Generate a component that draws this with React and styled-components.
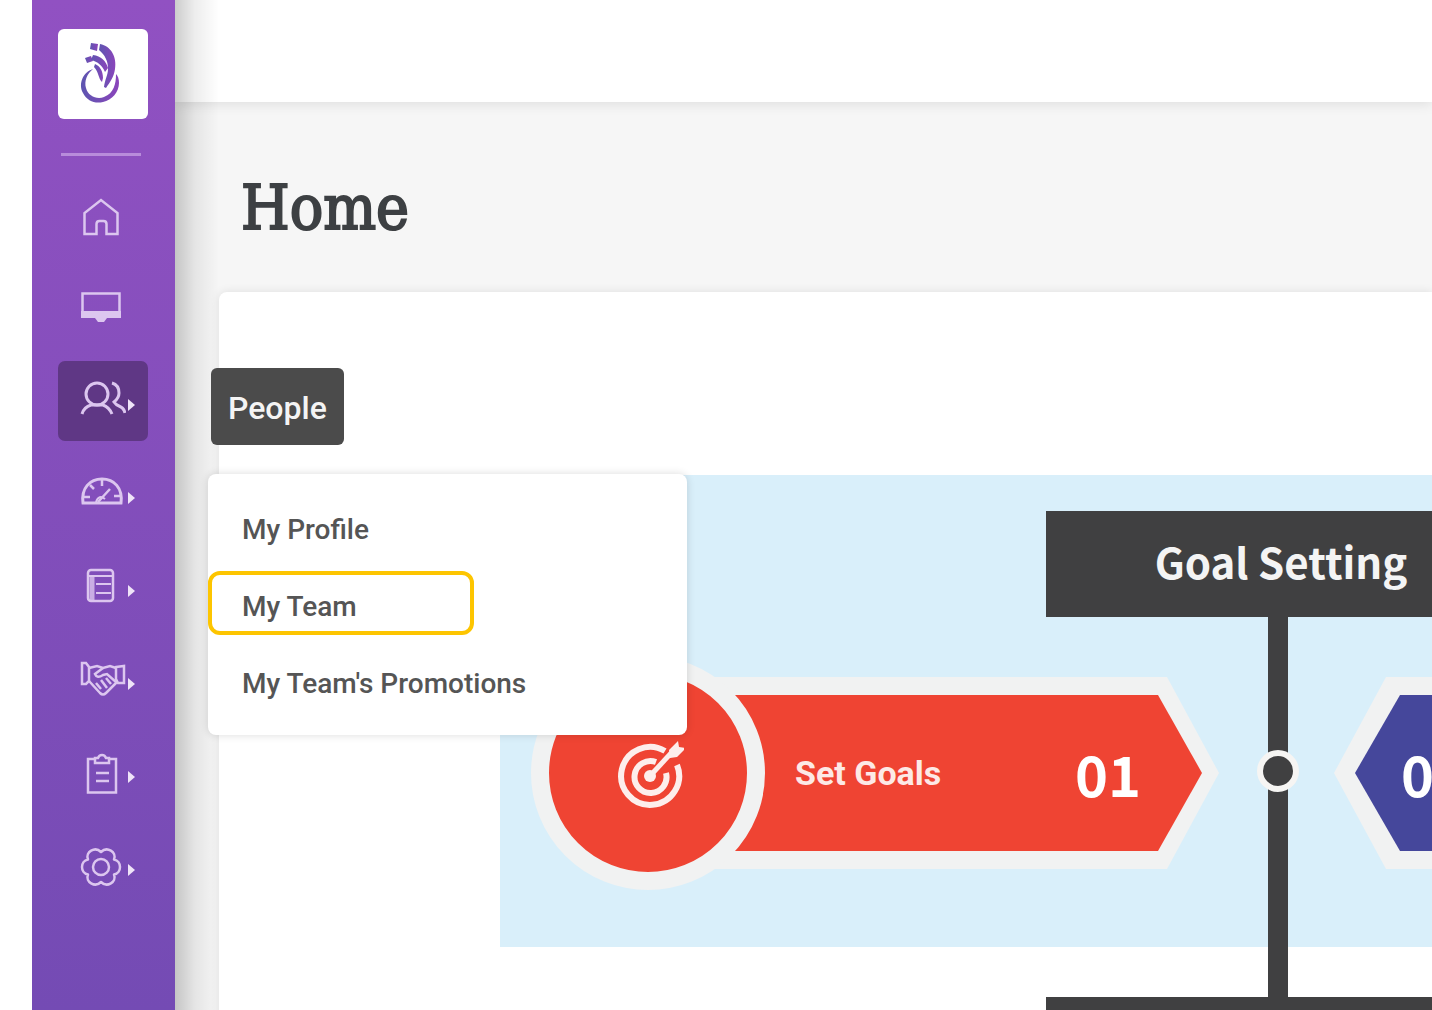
import React from 'react'
import styled, { createGlobalStyle } from 'styled-components'

const GlobalStyle = createGlobalStyle`
  * {
    box-sizing: border-box;
  }
  body {
    margin: 0;
    background-color: #fff;
    font-family: Roboto, 'Liberation Sans', sans-serif;
  }
`

const Page = styled.div`
  display: flex;
  width: 100%;
  height: 100vh;
  padding-left: 32px;
  overflow: hidden;
`

const Sidebar = styled.aside`
  position: relative;
  z-index: 2;
  flex: none;
  display: flex;
  flex-direction: column;
  width: 143px;
  padding: 29px 26px 0;
  background: linear-gradient(#9151c2, #744bb4);

  &::after {
    content: '';
    position: absolute;
    top: 0;
    bottom: 0;
    left: 100%;
    width: 44px;
    background: linear-gradient(
      to right,
      rgba(0, 0, 0, 0.2),
      rgba(0, 0, 0, 0.07) 45%,
      rgba(0, 0, 0, 0)
    );
    pointer-events: none;
  }
`

const LogoLink = styled.a`
  display: block;
  width: 90px;
  height: 90px;
  border-radius: 6px;
  background-color: #fff;
`

const Divider = styled.hr`
  width: 80px;
  height: 3px;
  margin: 34px 0 19px 3px;
  border: 0;
  background-color: #b88cdb;
`

const NavList = styled.ul`
  display: flex;
  flex-direction: column;
  gap: 13px;
  margin: 0;
  padding: 0;
  list-style: none;
`

const NavItem = styled.li`
  position: relative;
`

const NavButton = styled.button`
  display: flex;
  align-items: center;
  width: 90px;
  height: 80px;
  padding: 0 0 0 20px;
  border: 0;
  border-radius: 7px;
  background-color: ${({ $active }) => ($active ? '#5f3785' : 'transparent')};
  color: #dcc6ef;
  cursor: pointer;
`

const Icon = styled.svg`
  flex: none;
  width: 48px;
  height: 48px;
  fill: none;
  stroke: currentColor;
  stroke-width: 3;
`

const Caret = styled.svg`
  flex: none;
  width: 10px;
  height: 48px;
  fill: #efe4f8;
`

const Flyout = styled.div`
  position: absolute;
  z-index: 1;
  top: 7px;
  left: 150px;
  width: 479px;
`

const FlyoutTitle = styled.div`
  width: fit-content;
  height: 77px;
  margin: 0 0 29px 3px;
  padding: 0 17px;
  border-radius: 6px;
  background-color: #4b4b4b;
  color: #f4f4f4;
  font-size: 32px;
  font-weight: 500;
  line-height: 80px;
`

const Menu = styled.ul`
  display: flex;
  flex-direction: column;
  gap: 13px;
  margin: 0;
  padding: 20px 0 23px;
  border-radius: 8px;
  background-color: #fff;
  box-shadow: 0 0 8px rgba(0, 0, 0, 0.14);
  list-style: none;
`

const MenuLink = styled.a`
  display: block;
  width: 266px;
  height: 64px;
  padding-left: 30px;
  border: 4px solid ${({ $marked }) => ($marked ? '#fdc500' : 'transparent')};
  border-radius: 12px;
  color: #555;
  font-size: 28px;
  font-weight: 500;
  line-height: 64px;
  text-decoration: none;
  white-space: nowrap;
`

const Main = styled.main`
  flex: 1;
  min-width: 0;
  background-color: #f6f6f6;
`

const TopBar = styled.header`
  height: 102px;
  background-color: #fff;
  box-shadow: 0 2px 12px rgba(0, 0, 0, 0.1);
`

const PageTitle = styled.h1`
  margin: 0;
  padding: 66px 66px 0;
  height: 190px;
  color: #3d4043;
  font-family: 'DejaVu Serif Condensed', 'DejaVu Serif', serif;
  font-size: 62px;
  font-weight: 400;
  line-height: 80px;
  -webkit-text-stroke: 2px #3d4043;
`

const Card = styled.section`
  height: 100%;
  margin-left: 44px;
  padding: 183px 0 0 281px;
  border-radius: 8px 0 0 0;
  background-color: #fff;
  box-shadow: 0 0 10px rgba(0, 0, 0, 0.1);
  overflow: hidden;
`

const Diagram = styled.div`
  width: 1554px;
`

const Stage = styled.div`
  padding-top: 36px;
  background-color: ${({ $tint }) => $tint};
`

const StageTitle = styled.h2`
  width: 470px;
  height: 106px;
  margin: 0 0 0 546px;
  background-color: #404041;
  color: #f4f4f4;
  font-family: 'Noto Sans CJK JP', sans-serif;
  font-size: 42px;
  font-weight: 700;
  line-height: 100px;
  text-align: center;
`

const Lane = styled.div`
  display: grid;
  grid-template-columns: 768px 20px 1fr;
  height: 330px;
`

const Spine = styled.div`
  display: flex;
  justify-content: center;
  padding-top: 133px;
  background-color: #404041;
`

const SpineDot = styled.span`
  flex: none;
  width: 42px;
  height: 42px;
  border: 6px solid #f6f5f3;
  border-radius: 50%;
  background-color: #404041;
`

const Connector = styled.div`
  width: 20px;
  height: 50px;
  margin-left: 768px;
  background-color: #404041;
`

const Step = styled.div`
  display: flex;
  align-items: center;
  height: 234px;
  margin-top: 39px;
  padding: ${({ $side }) => ($side === 'left' ? '0 49px 0 31px' : '0 31px 0 46px')};
`

const StepBadge = styled.div`
  z-index: 1;
  flex: none;
  display: grid;
  place-items: center;
  width: 234px;
  height: 234px;
  border: 18px solid #f1f2f2;
  border-radius: 50%;
  background-color: ${({ $color }) => $color};
`

const StepOutline = styled.div`
  flex: 1;
  height: 192px;
  background-color: #f1f2f2;
  ${({ $side }) =>
    $side === 'left'
      ? `margin-left: -117px;
         padding: 18px 17px 18px 0;
         clip-path: polygon(0 0, calc(100% - 52px) 0, 100% 50%, calc(100% - 52px) 100%, 0 100%);`
      : `margin-right: -117px;
         padding: 18px 0 18px 21px;
         clip-path: polygon(52px 0, 100% 0, 100% 100%, 52px 100%, 0 50%);`}
`

const StepBar = styled.div`
  display: flex;
  align-items: center;
  justify-content: space-between;
  height: 100%;
  background-color: ${({ $color }) => $color};
  color: #fff;
  ${({ $side }) =>
    $side === 'left'
      ? `padding: 0 61px 0 147px;
         clip-path: polygon(0 0, calc(100% - 44px) 0, 100% 50%, calc(100% - 44px) 100%, 0 100%);`
      : `padding: 0 147px 0 46px;
         clip-path: polygon(45px 0, 100% 0, 100% 100%, 45px 100%, 0 50%);`}
`

const StepName = styled.span`
  color: #fde9e6;
  font-size: 34px;
  font-weight: 700;
`

const StepNumber = styled.span`
  font-family: 'Noto Sans CJK JP', sans-serif;
  font-size: 56px;
  font-weight: 700;
  line-height: 56px;
`

const Target = styled.svg`
  width: 72px;
  height: 72px;
  fill: none;
  stroke: #fdeeec;
  stroke-width: 6;
`

const icons = {
  home: <path d="M6.500 43V22L23 9l16.500 13v21H28.500V33q0-3-3-3h-4q-3 0-3 3v10z" strokeWidth="2.500" />,
  screen: (
    <>
      <path d="M4.500 30V9.500h37V30" strokeWidth="2.500" />
      <path d="M3 27h40v7H29l-3 4h-6l-3-4H3z" fill="currentColor" stroke="none" />
    </>
  ),
  people: (
    <>
      <circle cx="19" cy="17" r="11" strokeWidth="3" />
      <path d="M4 37q2-7 9-9h12q6 2 9 9" />
      <path d="M34 6q7 2 7 10 0 5-5 9 2 3 5 4 5 2 6 7" />
    </>
  ),
  gauge: (
    <>
      <path d="M5 33C3 18 12 9 24 9s21 9 19 24z" />
      <path d="M20 32l12-13M24 10v6M12 15l4 4M6 27h6M36 26h6" strokeWidth="2.500" />
      <path d="M18 32q3-8 9-3" strokeWidth="2" />
    </>
  ),
  ledger: (
    <>
      <rect x="10" y="7" width="25" height="31" rx="3" strokeWidth="2.500" />
      <path d="M10 13h25M18 21h15M18 30h15" strokeWidth="2" />
      <path d="M14 13v24" strokeWidth="5" opacity="0.8" />
    </>
  ),
  handshake: (
    <g strokeWidth="2.500">
      <path d="M4 7h4l3 4v14l-3 3H4z" />
      <path d="M38 11l8-1v17h-6l-2-4z" />
      <path d="M11 12l8-2 6 2 7-2 6 2M11 25l11 12q3 3 6 0l11-11" />
      <path d="M25 12l-8 6q2 5 8 1l4-1 9 8M18 27l5 6M23 24l6 8M28 22l5 6" />
    </g>
  ),
  clipboard: (
    <>
      <path d="M17 10h-7v33.500h28V10h-7" strokeWidth="2.500" />
      <path d="M17 14v-5h3q1-3 4-3t4 3h3v5z" strokeWidth="2.500" />
      <path d="M18 24h13M18 32h13" strokeWidth="2.500" />
    </>
  ),
  gear: (
    <g strokeWidth="2.500" strokeLinejoin="round">
      <circle cx="23" cy="25" r="8" />
      <path d="M36 17.500C44 19 44 31 36 32.500C39 40 29 46 23 40C17 46 7 40 10 32.500C2 31 2 19 10 17.500C7 10 17 4 23 10C29 4 39 10 36 17.500z" />
    </g>
  ),
}

const navItems = [
  { id: 'home', label: 'Home' },
  { id: 'screen', label: 'Dashboard' },
  { id: 'people', label: 'People', more: true },
  { id: 'gauge', label: 'Performance', more: true },
  { id: 'ledger', label: 'Records', more: true },
  { id: 'handshake', label: 'Engagement', more: true },
  { id: 'clipboard', label: 'Tasks', more: true },
  { id: 'gear', label: 'Settings', more: true },
]

const menuItems = ['My Profile', 'My Team', "My Team's Promotions"]

const Logo = () => (
  <svg width="90" height="90" viewBox="0 0 90 90" aria-hidden="true">
    <defs>
      <linearGradient id="logo" x1="0" y1="0" x2="1" y2="0">
        <stop offset="0" stopColor="#5d55b0" />
        <stop offset="1" stopColor="#8b45bb" />
      </linearGradient>
    </defs>
    <g fill="url(#logo)">
      <path d="M33 14l7 1-1 7-7-2z" />
      <path d="M42 15c11 2 17 13 15 25-1 8-5 13-9 19l-2-1c1-8 4-12 4-18 0-8-3-14-9-19z" />
      <path d="M27 29l6-2 2 5-6 2z" />
      <path d="M35 26c8 1 13 6 15 13l-3 4c-3-7-7-10-14-12z" />
      <path d="M37 35c5 2 8 7 8 14l-1 4c-4-4-3-10-8-15z" />
      <path d="M35 40c-10 3-15 15-10 24 4 8 12 11 20 9 9-2 16-10 16-19 0-4-1-7-3-9 0 10-2 19-12 23-7 3-16-1-18-9-2-7 1-14 7-19z" />
    </g>
  </svg>
)

const NavEntry = ({ item, active, children }) => (
  <NavItem>
    <NavButton type="button" aria-label={item.label} $active={active}>
      <Icon viewBox="0 0 48 48">{icons[item.id]}</Icon>
      {item.more && (
        <Caret viewBox="0 0 10 48">
          <path d="M2 22l7 6-7 6z" />
        </Caret>
      )}
    </NavButton>
    {children}
  </NavItem>
)

const PeopleFlyout = () => (
  <Flyout>
    <FlyoutTitle>People</FlyoutTitle>
    <Menu>
      {menuItems.map((name) => (
        <li key={name}>
          <MenuLink href="#" $marked={name === 'My Team'}>
            {name}
          </MenuLink>
        </li>
      ))}
    </Menu>
  </Flyout>
)

const TargetIcon = () => (
  <Target viewBox="0 0 72 72">
    <path d="M53 14A29 29 0 1 0 65 28" />
    <path d="M44 25A16 16 0 1 0 54 36" />
    <path d="M38 39L61 14" strokeWidth="5" />
    <circle cx="38" cy="39" r="6" fill="#fdeeec" stroke="none" />
    <path d="M57 13l9-9 1 6 7 1-9 9-7 1z" fill="#fdeeec" stroke="none" />
  </Target>
)

const App = () => {
  return (
    <>
      <GlobalStyle />
      <Page>
        <Sidebar>
          <LogoLink href="#" aria-label="Start page">
            <Logo />
          </LogoLink>
          <Divider />
          <nav>
            <NavList>
              {navItems.map((item) => (
                <NavEntry key={item.id} item={item} active={item.id === 'people'}>
                  {item.id === 'people' && <PeopleFlyout />}
                </NavEntry>
              ))}
            </NavList>
          </nav>
        </Sidebar>
        <Main>
          <TopBar />
          <PageTitle>Home</PageTitle>
          <Card>
            <Diagram>
              <Stage $tint="#d9effa">
                <StageTitle>Goal Setting</StageTitle>
                <Lane>
                  <Step $side="left">
                    <StepBadge $color="#ef4433">
                      <TargetIcon />
                    </StepBadge>
                    <StepOutline $side="left">
                      <StepBar $side="left" $color="#ef4433">
                        <StepName>Set Goals</StepName>
                        <StepNumber>01</StepNumber>
                      </StepBar>
                    </StepOutline>
                  </Step>
                  <Spine>
                    <SpineDot />
                  </Spine>
                  <Step $side="right">
                    <StepOutline $side="right">
                      <StepBar $side="right" $color="#45479b">
                        <StepNumber>02</StepNumber>
                      </StepBar>
                    </StepOutline>
                    <StepBadge $color="#45479b" />
                  </Step>
                </Lane>
              </Stage>
              <Connector />
              <StageTitle />
            </Diagram>
          </Card>
        </Main>
      </Page>
    </>
  )
}

export default App
